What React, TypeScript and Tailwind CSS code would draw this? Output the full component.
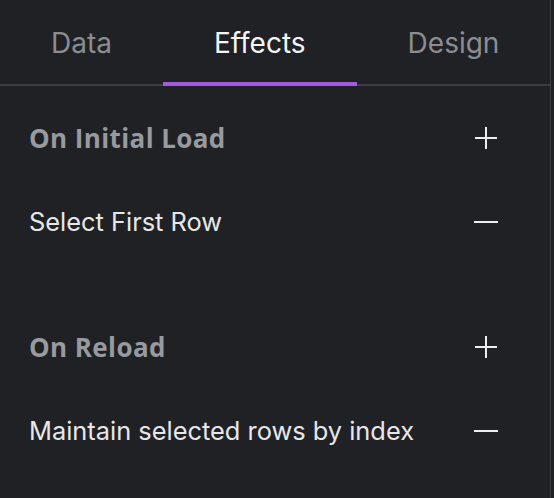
import React from "react";

function PlusIcon() {
  return (
    <svg width="24" height="24" viewBox="0 0 24 24" className="block">
      <path d="M12 1v22M1 12h22" stroke="#eceef0" strokeWidth="2" fill="none" />
    </svg>
  );
}

function MinusIcon() {
  return (
    <svg width="24" height="24" viewBox="0 0 24 24" className="block">
      <path d="M0 12h24" stroke="#eceef0" strokeWidth="2" fill="none" />
    </svg>
  );
}

function Section({ title, item }: { title: string; item: string }) {
  return (
    <div className="flex flex-col gap-[28px]">
      <div className="flex h-[56px] items-center justify-between pl-[29px] pr-[52px]">
        <span
          className="text-[26px] font-bold tracking-[0.4px] text-[#979a9f]"
          style={{ fontFamily: "'Open Sans', 'Noto Sans', sans-serif" }}
        >
          {title}
        </span>
        <PlusIcon />
      </div>
      <div className="flex h-[56px] items-center justify-between pl-[29px] pr-[52px]">
        <span className="text-[25.4px] text-[#e6e7e9]">{item}</span>
        <MinusIcon />
      </div>
    </div>
  );
}

export default function App() {
  const tabs = [
    { label: "Data", active: false },
    { label: "Effects", active: true },
    { label: "Design", active: false },
  ];
  return (
    <div
      className="flex h-[498px] w-[554px] bg-[#202125]"
      style={{ fontFamily: "Inter, 'Noto Sans', sans-serif" }}
    >
      <div className="flex h-full w-[551px] flex-col border-r border-[#3c3d41]">
        <div className="flex h-[86px] items-end border-b-2 border-[#3c3d41]">
          {tabs.map((t) => (
            <div
              key={t.label}
              className={
                "-mb-[2px] flex h-[86px] items-center border-b-4 px-[51px] pt-[4px] text-[28px] " +
                (t.active
                  ? "border-[#a259e0] text-[#f4f5f6]"
                  : "border-transparent text-[#8a8d92]")
              }
            >
              {t.label}
            </div>
          ))}
        </div>
        <div className="flex flex-col gap-[69px] pt-[24px]">
          <Section title="On Initial Load" item="Select First Row" />
          <Section title="On Reload" item="Maintain selected rows by index" />
        </div>
      </div>
    </div>
  );
}
